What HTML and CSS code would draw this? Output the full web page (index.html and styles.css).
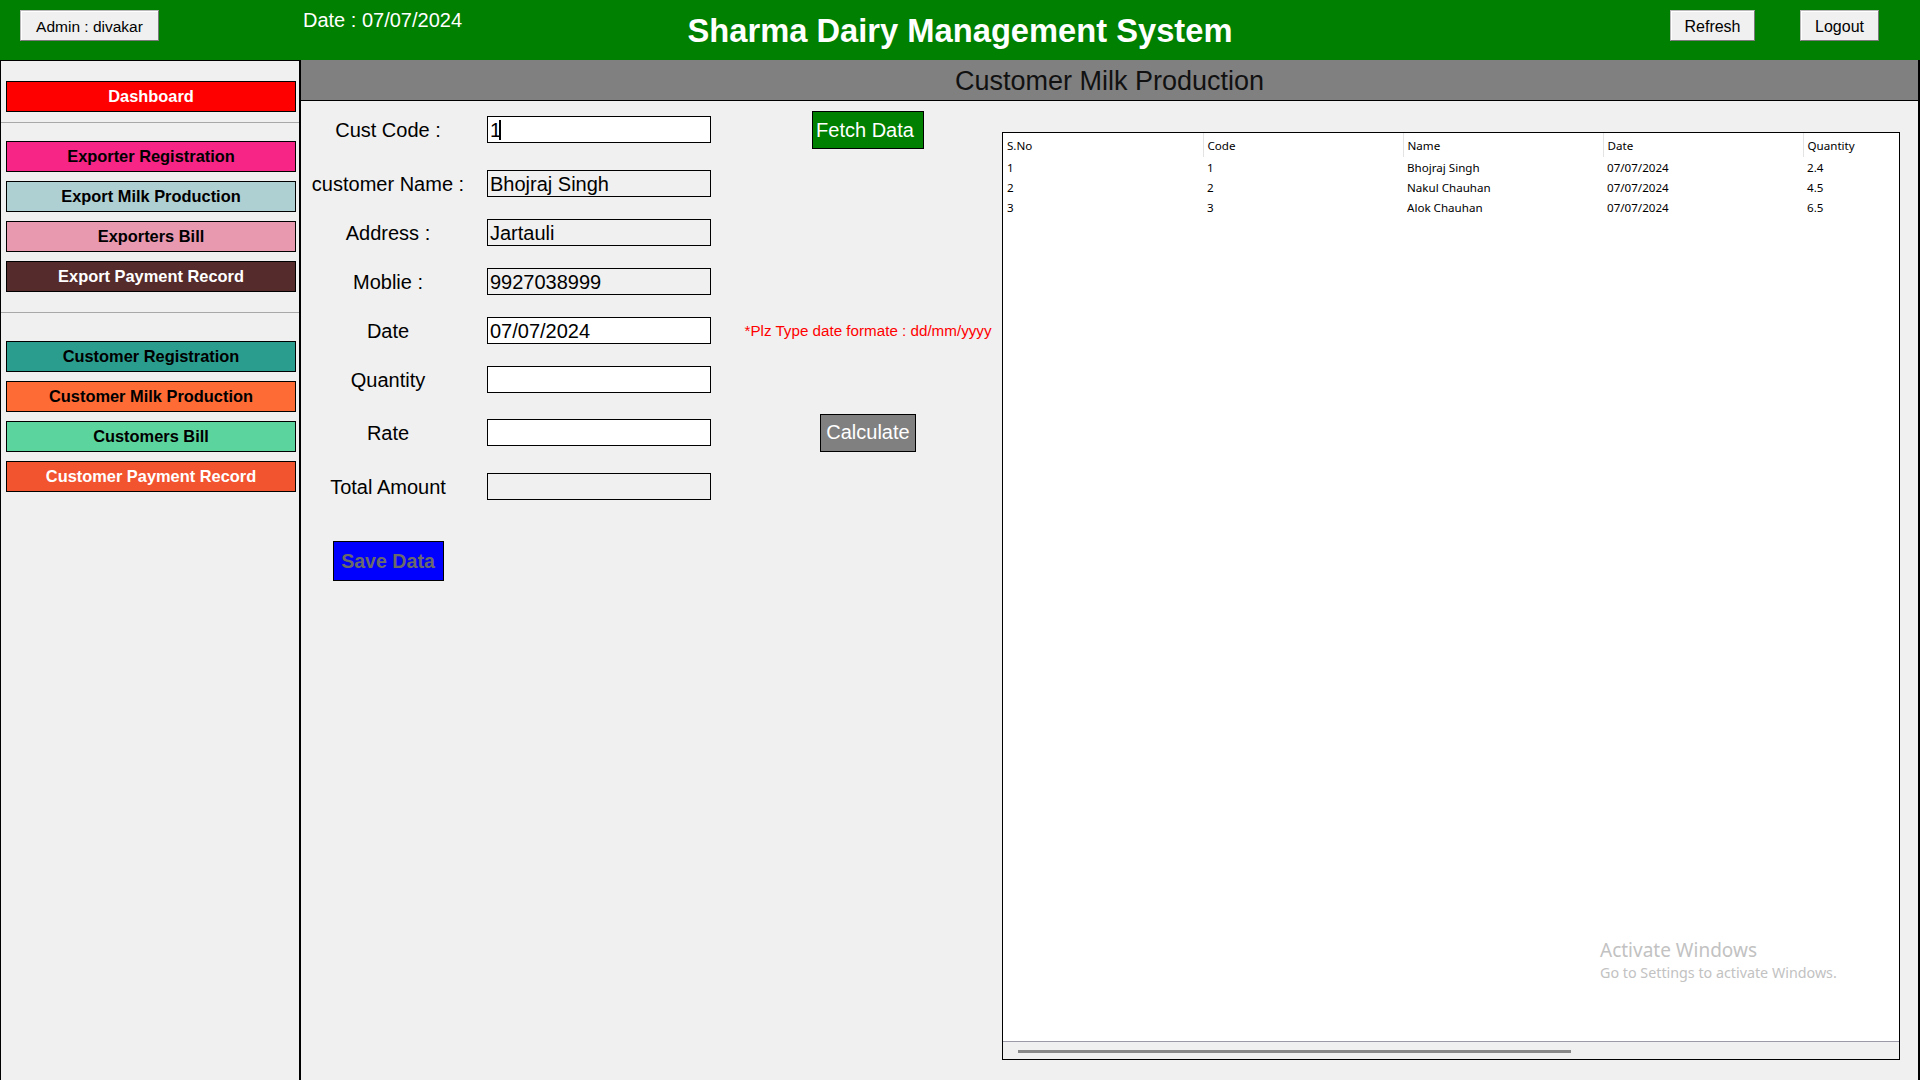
FILE: index.html
```html
<!DOCTYPE html>
<html lang="en">
<head>
<meta charset="utf-8">
<title>Sharma Dairy Management System</title>
<link rel="stylesheet" href="styles.css">
</head>
<body>
<div class="app">
  <header class="topbar">
    <div class="top-left">
      <button class="win-btn admin">Admin : divakar</button>
      <span class="date">Date : 07/07/2024</span>
    </div>
    <h1 class="title">Sharma Dairy Management System</h1>
    <div class="top-right">
      <button class="win-btn refresh">Refresh</button>
      <button class="win-btn logout">Logout</button>
    </div>
  </header>

  <div class="main">
    <nav class="sidebar">
      <button class="nav-btn dash">Dashboard</button>
      <div class="sep sep1"></div>
      <button class="nav-btn exp-reg first">Exporter Registration</button>
      <button class="nav-btn exp-milk">Export Milk Production</button>
      <button class="nav-btn exp-bill">Exporters Bill</button>
      <button class="nav-btn exp-pay">Export Payment Record</button>
      <div class="sep sep2"></div>
      <button class="nav-btn cus-reg first2">Customer Registration</button>
      <button class="nav-btn cus-milk">Customer Milk Production</button>
      <button class="nav-btn cus-bill">Customers Bill</button>
      <button class="nav-btn cus-pay">Customer Payment Record</button>
    </nav>

    <section class="content">
      <div class="page-title">Customer Milk Production</div>
      <div class="workspace">
        <div class="form">
          <div class="row r1">
            <span class="label">Cust Code :</span>
            <div class="field white">1<span class="caret"></span></div>
            <div class="extra"><button class="fetch">Fetch Data</button></div>
          </div>
          <div class="row r2">
            <span class="label">customer Name :</span>
            <div class="field">Bhojraj Singh</div>
          </div>
          <div class="row r3">
            <span class="label">Address :</span>
            <div class="field">Jartauli</div>
          </div>
          <div class="row r4">
            <span class="label">Moblie :</span>
            <div class="field">9927038999</div>
          </div>
          <div class="row r5">
            <span class="label">Date</span>
            <div class="field white">07/07/2024</div>
            <div class="extra"><span class="hint">*Plz Type date formate : dd/mm/yyyy</span></div>
          </div>
          <div class="row r6">
            <span class="label">Quantity</span>
            <div class="field white"></div>
          </div>
          <div class="row r7">
            <span class="label">Rate</span>
            <div class="field white"></div>
            <div class="extra"><button class="calc">Calculate</button></div>
          </div>
          <div class="row r8">
            <span class="label">Total Amount</span>
            <div class="field"></div>
          </div>
          <div class="save-row">
            <button class="save">Save Data</button>
          </div>
        </div>

        <div class="table-panel">
          <div class="table-scroll">
            <table class="grid">
              <thead>
                <tr><th>S.No</th><th>Code</th><th>Name</th><th>Date</th><th>Quantity</th></tr>
              </thead>
              <tbody>
                <tr><td>1</td><td>1</td><td>Bhojraj Singh</td><td>07/07/2024</td><td>2.4</td></tr>
                <tr><td>2</td><td>2</td><td>Nakul Chauhan</td><td>07/07/2024</td><td>4.5</td></tr>
                <tr><td>3</td><td>3</td><td>Alok Chauhan</td><td>07/07/2024</td><td>6.5</td></tr>
              </tbody>
            </table>
          </div>
          <div class="hscroll"><div class="thumb"></div></div>
        </div>
      </div>
    </section>
  </div>

  <div class="watermark">
    <div class="wm1">Activate Windows</div>
    <div class="wm2">Go to Settings to activate Windows.</div>
  </div>
</div>
</body>
</html>
```

FILE: styles.css
```css
* { box-sizing: border-box; }

html, body {
  margin: 0;
  padding: 0;
  width: 1920px;
  height: 1080px;
  overflow: hidden;
  background: #f0f0f0;
  font-family: "Liberation Sans", Arial, sans-serif;
  color: #000;
}

.app {
  position: relative;
  width: 1920px;
  height: 1080px;
  display: flex;
  flex-direction: column;
}

/* ---------- top bar ---------- */
.topbar {
  height: 60px;
  flex: 0 0 60px;
  background: #008000;
  display: grid;
  grid-template-columns: 1fr auto 1fr;
  align-items: start;
}

.top-left {
  display: flex;
  align-items: flex-start;
}

.top-right {
  display: flex;
  justify-content: flex-end;
  align-items: flex-start;
  gap: 45px;
  padding-right: 41px;
}

.win-btn {
  margin: 10px 0 0 0;
  height: 31px;
  padding: 2px 0 0 0;
  font-family: "Liberation Sans", Arial, sans-serif;
  font-size: 16px;
  color: #000;
  background: #f0f0f0;
  border: 1px solid #b9b9b9;
  border-right-color: #7a7a7a;
  border-bottom-color: #7a7a7a;
  box-shadow: inset 1px 1px 0 #ffffff;
}

.admin { margin-left: 20px; width: 139px; font-size: 15.5px; }
.refresh { width: 85px; }
.logout { width: 79px; }

.date {
  margin: 8px 0 0 144px;
  font-size: 20px;
  line-height: 24px;
  color: #fff;
  white-space: nowrap;
}

.title {
  margin: 13px 0 0 0;
  font-size: 32.7px;
  line-height: 36px;
  font-weight: bold;
  color: #fff;
  white-space: nowrap;
}

/* ---------- main area ---------- */
.main {
  flex: 1;
  display: flex;
  min-height: 0;
}

.sidebar {
  width: 301px;
  flex: 0 0 301px;
  border: 1px solid #000;
  border-right-width: 2px;
  border-bottom: none;
  background: #f0f0f0;
  padding: 20px 0 0 5px;
  display: flex;
  flex-direction: column;
  align-items: flex-start;
}

.nav-btn {
  width: 290px;
  height: 31px;
  flex: none;
  margin: 9px 0 0 0;
  padding: 0;
  border: 1px solid #000;
  font-family: "Liberation Sans", Arial, sans-serif;
  font-size: 16.4px;
  font-weight: bold;
  color: #000;
}

.nav-btn.dash { margin-top: 0; background: #ff0000; color: #fff; }
.nav-btn.first, .nav-btn.first2 { margin-top: 0; }

.sep {
  width: 298px;
  height: 1px;
  flex: none;
  margin-left: -5px;
  background: #a8a8a8;
}
.sep1 { margin-top: 10px; margin-bottom: 18px; }
.sep2 { margin-top: 20px; margin-bottom: 28px; }

.exp-reg { background: #f72585; }
.exp-milk { background: #afd0d3; }
.exp-bill { background: #e899b0; }
.exp-pay { background: #552b2b; color: #fff; }
.cus-reg { background: #2a9d8f; }
.cus-milk { background: #ff6b35; }
.cus-bill { background: #5cd49e; }
.cus-pay { background: #f25430; color: #fff; }

/* ---------- content ---------- */
.content {
  flex: 1;
  display: flex;
  flex-direction: column;
  background: #f0f0f0;
  border-right: 2px solid #000;
  min-width: 0;
}

.page-title {
  height: 41px;
  flex: 0 0 41px;
  background: #808080;
  border-bottom: 1px solid #000;
  text-align: center;
  font-size: 27px;
  line-height: 40px;
  padding-top: 1px;
  color: #111;
}

.workspace {
  display: flex;
  align-items: flex-start;
}

.form {
  width: 701px;
  flex: 0 0 701px;
  display: flex;
  flex-direction: column;
  padding-top: 15px;
}

.row {
  height: 27px;
  display: flex;
  align-items: center;
}
.r2 { margin-top: 27px; }
.r3, .r4, .r5, .r6 { margin-top: 22px; }
.r7 { margin-top: 26px; }
.r8 { margin-top: 27px; }

.label {
  width: 174px;
  flex: none;
  text-align: center;
  font-size: 20px;
  line-height: 27px;
  padding-top: 2px;
  white-space: nowrap;
}

.field {
  width: 224px;
  flex: none;
  height: 27px;
  margin-left: 12px;
  border: 1px solid #000;
  background: #f0f0f0;
  padding: 1px 0 0 2px;
  font-size: 20px;
  line-height: 25px;
  white-space: nowrap;
}
.field.white { background: #fff; }

.caret {
  display: inline-block;
  width: 2px;
  height: 20px;
  background: #000;
  vertical-align: -3px;
  margin-left: -2px;
}

.extra {
  width: 264px;
  flex: none;
  margin-left: 25px;
  display: flex;
  justify-content: center;
  align-items: center;
}

.fetch, .calc {
  height: 38px;
  flex: none;
  padding: 0;
  border: 1px solid #000;
  font-family: "Liberation Sans", Arial, sans-serif;
  font-size: 20px;
  color: #fff;
}
.fetch { width: 112px; background: #008000; padding: 2px 6px 0 0; }
.calc { width: 96px; background: #808080; }

.hint {
  font-size: 15.2px;
  color: #ff0000;
  white-space: nowrap;
}

.save-row {
  width: 174px;
  margin-top: 41px;
  display: flex;
  justify-content: center;
}

.save {
  width: 111px;
  height: 40px;
  padding: 0;
  border: 1px solid #000;
  background: #0000ff;
  color: #6a6a6a;
  font-family: "Liberation Sans", Arial, sans-serif;
  font-size: 19.6px;
  font-weight: bold;
}

/* ---------- table ---------- */
.table-panel {
  width: 898px;
  flex: 0 0 898px;
  height: 928px;
  margin-top: 31px;
  border: 1px solid #000;
  background: #fff;
  display: flex;
  flex-direction: column;
}

.table-scroll {
  flex: 1;
  overflow: hidden;
}

.grid {
  border-collapse: collapse;
  table-layout: fixed;
  width: 1000px;
  font-family: "Noto Sans", "Open Sans", sans-serif;
  font-size: 11.6px;
  color: #000;
}

.grid th {
  width: 200px;
  height: 24px;
  padding: 0 4px;
  text-align: left;
  font-weight: normal;
  border-right: 1px solid #e3e3e3;
  vertical-align: middle;
}

.grid td {
  height: 20px;
  padding: 0 4px;
  vertical-align: middle;
  white-space: nowrap;
}

.hscroll {
  height: 18px;
  flex: 0 0 18px;
  background: #f0f0f0;
  border-top: 1px solid #9c9aa8;
}

.thumb {
  width: 553px;
  height: 3px;
  margin: 8px 0 0 15px;
  background: #888;
}

/* ---------- watermark ---------- */
.watermark {
  position: absolute;
  left: 1600px;
  top: 938px;
  font-family: "Noto Sans", "Open Sans", sans-serif;
  color: #c2c2c2;
  pointer-events: none;
}
.wm1 { font-size: 19px; line-height: 24px; }
.wm2 { font-size: 14.3px; line-height: 18px; margin-top: 2px; }
```
